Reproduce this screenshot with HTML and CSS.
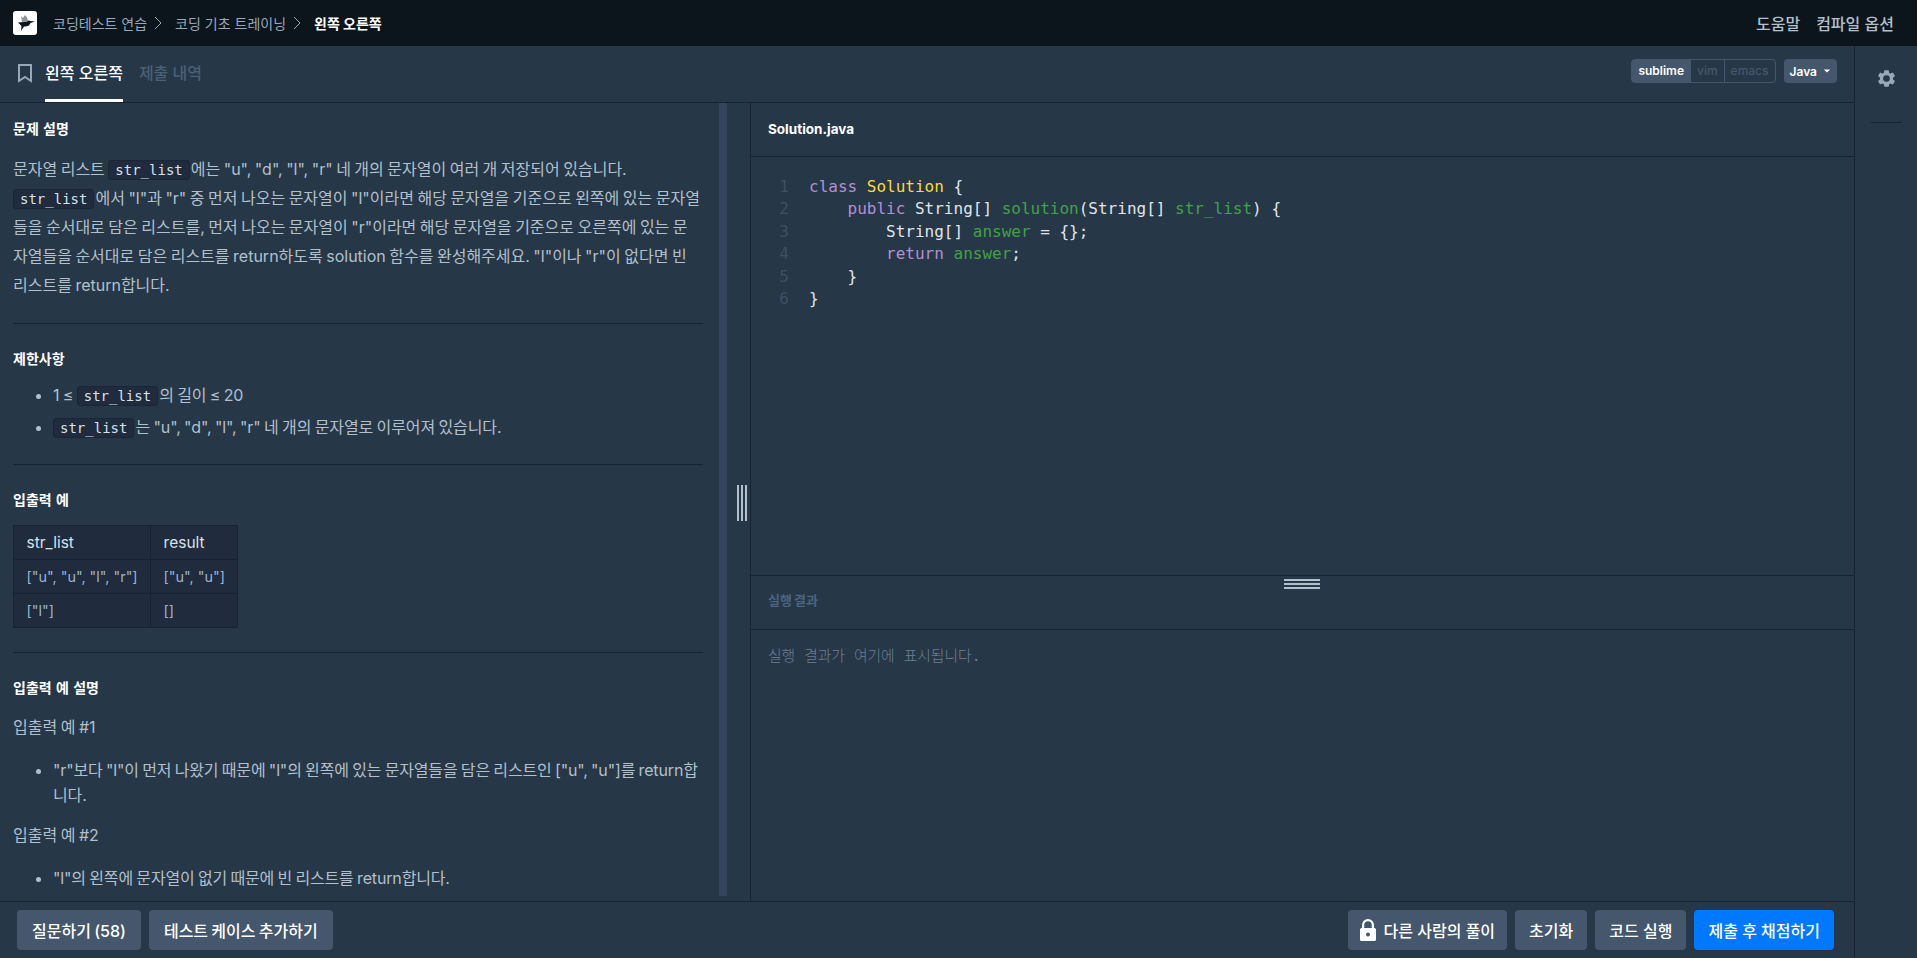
FILE: index.html
```html
<!DOCTYPE html>
<html lang="ko">
<head>
    <meta charset="UTF-8">
    <title>왼쪽 오른쪽</title>
    <link rel="stylesheet" href="styles.css">
</head>
<body>
    <nav class="topbar">
        <div class="crumbs">
            <span class="logo">
                <svg width="24" height="24" viewBox="0 0 24 24">
                    <path fill="#8a949c" d="M8 5l2 2 2-3 2 2.500 1 3-2 1-4 .5z"/>
                    <path fill="#0c151c" d="M5 11.500l6-.5 3-.5q1.500-1.500 3-.5l5 .5-4.500 1.500q-1.500 4-6.500 3.500L8 20l.5-5z"/>
                </svg>
            </span>
            <span class="crumb">코딩테스트 연습</span>
            <svg class="chevron" width="8" height="14" viewBox="0 0 8 14"><path fill="none" stroke="#98a8b9" d="M1 1l6 6-6 6"/></svg>
            <span class="crumb">코딩 기초 트레이닝</span>
            <svg class="chevron" width="8" height="14" viewBox="0 0 8 14"><path fill="none" stroke="#98a8b9" d="M1 1l6 6-6 6"/></svg>
            <span class="crumb current">왼쪽 오른쪽</span>
        </div>
        <div class="topmenu">
            <span>도움말</span>
            <span>컴파일 옵션</span>
        </div>
    </nav>

    <div class="page">
        <div class="workspace">
            <div class="tabbar">
                <svg class="bookmark" width="16" height="20" viewBox="0 0 16 20"><path fill="none" stroke="#98a8b9" stroke-width="2" d="M2 2h12v16l-6-4-6 4z"/></svg>
                <span class="tab active">왼쪽 오른쪽</span>
                <span class="tab">제출 내역</span>
                <div class="tabtools">
                    <div class="keymap">
                        <span class="key on">sublime</span>
                        <span class="key">vim</span>
                        <span class="key">emacs</span>
                    </div>
                    <span class="lang">Java<i class="caret"></i></span>
                </div>
            </div>

            <div class="panes">
                <section class="guide">
                    <div class="guide-body">
                        <h5>문제 설명</h5>
                        <p class="desc">문자열 리스트 <code>str_list</code>에는 "u", "d", "l", "r" 네 개의 문자열이 여러 개 저장되어 있습니다. <code>str_list</code>에서 "l"과 "r" 중 먼저 나오는 문자열이 "l"이라면 해당 문자열을 기준으로 왼쪽에 있는 문자열들을 순서대로 담은 리스트를, 먼저 나오는 문자열이 "r"이라면 해당 문자열을 기준으로 오른쪽에 있는 문자열들을 순서대로 담은 리스트를 return하도록 solution 함수를 완성해주세요. "l"이나 "r"이 없다면 빈 리스트를 return합니다.</p>
                        <hr>
                        <h5>제한사항</h5>
                        <ul class="limits">
                            <li>1 ≤ <code>str_list</code>의 길이 ≤ 20</li>
                            <li><code>str_list</code>는 "u", "d", "l", "r" 네 개의 문자열로 이루어져 있습니다.</li>
                        </ul>
                        <hr>
                        <h5>입출력 예</h5>
                        <table>
                            <tr><th>str_list</th><th>result</th></tr>
                            <tr><td>["u", "u", "l", "r"]</td><td>["u", "u"]</td></tr>
                            <tr><td>["l"]</td><td>[]</td></tr>
                        </table>
                        <hr>
                        <h5>입출력 예 설명</h5>
                        <p class="example">입출력 예 #1</p>
                        <ul class="notes">
                            <li>"r"보다 "l"이 먼저 나왔기 때문에 "l"의 왼쪽에 있는 문자열들을 담은 리스트인 ["u", "u"]를 return합니다.</li>
                        </ul>
                        <p class="example">입출력 예 #2</p>
                        <ul class="notes">
                            <li>"l"의 왼쪽에 문자열이 없기 때문에 빈 리스트를 return합니다.</li>
                        </ul>
                    </div>
                    <div class="scrollthumb"></div>
                    <div class="handle-v"></div>
                </section>

                <section class="run">
                    <div class="filename">Solution.java</div>
                    <div class="editor">
                        <div class="gutter">1<br>2<br>3<br>4<br>5<br>6</div>
<pre class="code"><span class="kw">class</span> <span class="cls">Solution</span> {
    <span class="kw">public</span> String[] <span class="def">solution</span>(String[] <span class="def">str_list</span>) {
        String[] <span class="def">answer</span> = {};
        <span class="kw">return</span> <span class="def">answer</span>;
    }
}</pre>
                    </div>
                    <div class="output">
                        <div class="handle-h"></div>
                        <div class="output-title">실행 결과</div>
                        <div class="output-text">실행 결과가 여기에 표시됩니다.</div>
                    </div>
                </section>
            </div>

            <footer class="actions">
                <div class="group">
                    <button class="btn">질문하기 (58)</button>
                    <button class="btn">테스트 케이스 추가하기</button>
                </div>
                <div class="group right">
                    <button class="btn locked">
                        <svg class="lock" width="16" height="22" viewBox="0 0 16 22"><path fill="#fff" d="M8 0a6 6 0 0 0-6 6v3H1.500A1.500 1.500 0 0 0 0 10.500v10A1.500 1.500 0 0 0 1.500 22h13a1.500 1.500 0 0 0 1.500-1.500v-10A1.500 1.500 0 0 0 14.500 9H14V6a6 6 0 0 0-6-6zm0 2.200A3.800 3.800 0 0 1 11.800 6v3H4.200V6A3.800 3.800 0 0 1 8 2.200zM8 13.500a2 2 0 1 1 0 4 2 2 0 0 1 0-4z"/></svg>
                        다른 사람의 풀이
                    </button>
                    <button class="btn">초기화</button>
                    <button class="btn">코드 실행</button>
                    <button class="btn primary">제출 후 채점하기</button>
                </div>
            </footer>
        </div>

        <aside class="sidebar">
            <svg width="21" height="21" viewBox="0 0 24 24"><path fill="#98a8b9" fill-rule="evenodd" d="M19.400 13a7.600 7.600 0 0 0 0-2l2.300-1.800-2.300-4-2.700 1.100a7.700 7.700 0 0 0-1.700-1L14.500 2.500h-5L9 5.300a7.700 7.700 0 0 0-1.700 1L4.600 5.200l-2.300 4L4.600 11a7.600 7.600 0 0 0 0 2l-2.300 1.800 2.300 4 2.700-1.100a7.700 7.700 0 0 0 1.700 1l.5 2.800h5l.5-2.800a7.700 7.700 0 0 0 1.700-1l2.700 1.100 2.300-4zM12 15.800a3.800 3.800 0 1 1 0-7.600 3.800 3.800 0 0 1 0 7.600z"/></svg>
            <div class="sidebar-line"></div>
        </aside>
    </div>
</body>
</html>
```

FILE: styles.css
```css
*
{
    box-sizing: border-box;
}
html, body
{
    height: 100%;
}
body
{
    margin: 0;
    display: flex;
    flex-direction: column;
    overflow: hidden;
    background: #263747;
    color: #b2c0cc;
    font-family: Inter, "Noto Sans CJK KR", sans-serif;
    font-size: 16px;
    word-spacing: -1px;
}

/* top bar */
.topbar
{
    flex: 0 0 46px;
    display: flex;
    justify-content: space-between;
    align-items: center;
    padding: 0 23px 0 13px;
    background: #0c151c;
    word-spacing: 0;
}
.crumbs
{
    display: flex;
    align-items: center;
}
.logo
{
    display: flex;
    width: 24px;
    height: 24px;
    margin-right: 16px;
    background: #fff;
    border-radius: 3px;
}
.crumb
{
    font-size: 14px;
    color: #98a8b9;
}
.crumb.current
{
    color: #fff;
    font-weight: 700;
}
.chevron
{
    margin: 0 13px 0 7px;
}
.topmenu
{
    display: flex;
    gap: 16px;
    font-size: 16px;
    font-weight: 500;
    color: #b2c0cc;
}

/* page */
.page
{
    flex: 1;
    display: flex;
    min-height: 0;
}
.workspace
{
    flex: 1;
    display: flex;
    flex-direction: column;
    min-width: 0;
}
.sidebar
{
    flex: 0 0 63px;
    display: flex;
    flex-direction: column;
    align-items: center;
    padding-top: 22px;
    border-left: 1px solid #172334;
}
.sidebar-line
{
    width: 31px;
    height: 1px;
    margin-top: 33px;
    background: #172334;
}

/* tabs */
.tabbar
{
    flex: 0 0 56px;
    display: flex;
    align-items: stretch;
    padding-left: 17px;
    border-bottom: 1px solid #172334;
    word-spacing: 0;
}
.bookmark
{
    align-self: center;
    margin-right: 12px;
    margin-bottom: 2px;
}
.tab
{
    margin-right: 16px;
    padding-top: 15px;
    line-height: 24px;
    font-weight: 500;
    color: #4a6075;
}
.tab.active
{
    height: 56px;
    color: #fff;
    border-bottom: 3px solid #fff;
}
.tabtools
{
    display: flex;
    gap: 8px;
    align-items: flex-start;
    margin-left: auto;
    padding: 13px 17px 0 0;
}
.keymap
{
    display: flex;
    height: 24px;
    border: 1px solid #44576c;
    border-radius: 4px;
    font-size: 12px;
    font-weight: 500;
    line-height: 22px;
    color: #44576c;
}
.key
{
    padding: 0 6px;
    border-left: 1px solid #44576c;
}
.key.on
{
    border-left: 0;
    background: #44576c;
    color: #fff;
    font-weight: 600;
}
.lang
{
    display: flex;
    align-items: center;
    height: 24px;
    padding: 0 6px;
    background: #44576c;
    border-radius: 4px;
    font-size: 12px;
    font-weight: 600;
    color: #fff;
}
.caret
{
    margin-left: 6px;
    border-top: 4px solid #fff;
    border-left: 4px solid transparent;
    border-right: 4px solid transparent;
    transform: scale(0.8);
}

/* left pane */
.panes
{
    flex: 1;
    display: flex;
    min-height: 0;
}
.guide
{
    position: relative;
    flex: 0 0 751px;
    display: flex;
    align-items: flex-start;
    height: 100%;
    overflow: hidden;
    border-right: 1px solid #172334;
}
.guide-body
{
    flex: 0 0 719px;
    height: 100%;
    overflow: hidden;
    padding: 15px 16px 0 13px;
    word-break: break-all;
}
.scrollthumb
{
    width: 8px;
    height: 793px;
    background: #33455c;
}
.handle-v
{
    position: absolute;
    left: 737px;
    top: 382px;
    width: 10px;
    height: 36px;
    background: repeating-linear-gradient(90deg, #b2c0cc 0 2px, #263747 2px 4px);
}
h5
{
    margin: 0 0 15px;
    font-size: 14px;
    line-height: 21px;
    font-weight: 700;
    word-spacing: 1px;
    color: #fff;
}
p
{
    margin: 0;
    line-height: 29px;
}
.desc
{
    margin: 0 2px -1px 0;
    padding-top: 1px;
}
hr
{
    height: 1px;
    margin: 24px 0;
    border: 0;
    background: #172334;
}
code
{
    padding: 1px 6px;
    margin-right: 1px;
    font-family: "DejaVu Sans Mono", monospace;
    font-size: 14px;
    line-height: 18px;
    letter-spacing: 0;
    white-space: nowrap;
    color: #d7e2eb;
    background: #202b3d;
    border: 1px solid #1a2636;
    border-radius: 4px;
}
ul
{
    margin: 0;
    padding-left: 40px;
}
li
{
    margin-bottom: 7px;
    line-height: 25px;
}
.limits
{
    margin: -1px 0 9px;
    letter-spacing: -0.1px;
}
.notes
{
    margin-bottom: 13px;
    letter-spacing: -0.15px;
}
.example
{
    margin-bottom: 16px;
}
table
{
    border-collapse: collapse;
    font-size: 14.400px;
    word-spacing: 0;
    background: #202b3d;
}
th, td
{
    height: 34px;
    padding: 0 12.500px;
    text-align: left;
    border: 1px solid #172334;
    font-weight: 400;
}
th
{
    font-size: 15.500px;
    color: #d7e2eb;
}
td
{
    color: #98b5d0;
}

/* right pane */
.run
{
    flex: 1;
    display: flex;
    flex-direction: column;
    min-width: 0;
}
.filename
{
    flex: 0 0 54px;
    padding: 16px 17px 0;
    font-size: 13.500px;
    line-height: 20px;
    font-weight: 700;
    color: #fff;
    border-bottom: 1px solid #172334;
}
.editor
{
    flex: 1;
    display: flex;
    padding-top: 19px;
    font-family: "DejaVu Sans Mono", monospace;
    font-size: 16px;
    line-height: 22.400px;
    word-spacing: 0;
}
.gutter
{
    width: 38px;
    text-align: right;
    color: #3e5064;
}
.code
{
    margin: 0 0 0 20px;
    font: inherit;
    color: #e0e5ea;
}
.kw
{
    color: #b58ed4;
}
.cls
{
    color: #ffd931;
}
.def
{
    color: #43a047;
}
.output
{
    position: relative;
    flex: 0 0 326px;
    border-top: 1px solid #172334;
}
.handle-h
{
    position: absolute;
    left: 533px;
    top: 3px;
    width: 36px;
    height: 10px;
    background: repeating-linear-gradient(180deg, #b2c0cc 0 2px, #263747 2px 4px);
}
.output-title
{
    height: 54px;
    padding: 15px 17px 0;
    font-size: 13px;
    line-height: 19px;
    font-weight: 700;
    color: #4a6580;
    border-bottom: 1px solid #172334;
}
.output-text
{
    padding: 14px 17px;
    font-family: "DejaVu Sans Mono", "Noto Sans CJK KR", monospace;
    font-size: 14.800px;
    font-weight: 300;
    word-spacing: 0;
    color: #6b7f93;
}

/* footer buttons */
.actions
{
    flex: 0 0 57px;
    display: flex;
    justify-content: space-between;
    align-items: center;
    padding: 0 20px 0 17px;
    border-top: 1px solid #172334;
}
.group
{
    display: flex;
    gap: 8px;
}
.btn
{
    display: flex;
    align-items: center;
    height: 40px;
    padding: 0 15px;
    border: 0;
    border-radius: 4px;
    background: #44576c;
    color: #fff;
    font-family: inherit;
    font-size: 16px;
    font-weight: 500;
    word-spacing: -1px;
}
.right .btn
{
    padding: 0 14px;
    word-spacing: 0;
}
.right .locked
{
    padding: 0 12px;
}
.btn.primary
{
    background: #0078ff;
}
.lock
{
    width: 16px;
    margin-right: 8px;
}
```
